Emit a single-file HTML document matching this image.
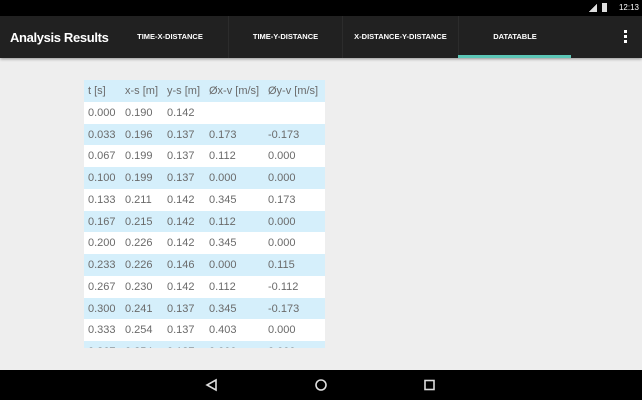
<!DOCTYPE html><html><head><style>
*{margin:0;padding:0;box-sizing:border-box}
body{width:642px;height:400px;overflow:hidden;background:#eeeeee;font-family:"Liberation Sans",sans-serif;position:relative}
.sb{position:absolute;top:0;left:0;width:642px;height:16px;background:#000;color:#fff;font-size:8px}
.tb{position:absolute;top:16px;left:0;width:642px;height:42px;background:#212121;color:#fff;box-shadow:0 1px 3px rgba(0,0,0,.4)}
.title{position:absolute;left:10px;top:14px;font-size:13px;font-weight:bold;letter-spacing:-.35px}
.tab{position:absolute;top:0;height:42px;font-size:7.5px;font-weight:bold;text-align:center;line-height:42px;border-left:1px solid #2c2c2c}
.ul{position:absolute;left:458px;top:39px;width:113px;height:3px;background:#5cc6b6}
.nav{position:absolute;top:370px;left:0;width:642px;height:30px;background:#000}
.tbl{position:absolute;left:84px;top:80px;width:241px;height:268px;overflow:hidden}
.r{height:21.75px;position:relative;font-size:11px;color:#6a6a6a;background:#fff}
.r.b{background:#d5effb}
.r span{position:absolute;top:5px}
</style></head><body>
<div class="sb"><span style="position:absolute;right:45px;top:4px;width:8px;height:8px;background:linear-gradient(135deg,transparent 50%,#ddd 50%)"></span><span style="position:absolute;right:35px;top:3px;width:5px;height:9px;background:#ddd"></span><span style="position:absolute;right:3px;top:3px">12:13</span></div>
<div class="tb"><div class="title">Analysis Results</div>
<div class="tab" style="left:112px;width:116px;border-left:none">TIME-X-DISTANCE</div>
<div class="tab" style="left:228px;width:114px">TIME-Y-DISTANCE</div>
<div class="tab" style="left:342px;width:116px">X-DISTANCE-Y-DISTANCE</div>
<div class="tab" style="left:458px;width:113px">DATATABLE</div>
<div class="ul"></div>
<div style="position:absolute;left:624px;top:14px;width:3px;height:3px;background:#fff;box-shadow:0 5px 0 #fff,0 10px 0 #fff"></div>
</div>
<div class="tbl">
<div class="r b"><span style="left:4px">t [s]</span><span style="left:41px">x-s [m]</span><span style="left:83px">y-s [m]</span><span style="left:125px">Øx-v [m/s]</span><span style="left:184px">Øy-v [m/s]</span></div>
<div class="r"><span style="left:4px">0.000</span><span style="left:41px">0.190</span><span style="left:83px">0.142</span></div>
<div class="r b"><span style="left:4px">0.033</span><span style="left:41px">0.196</span><span style="left:83px">0.137</span><span style="left:125px">0.173</span><span style="left:184px">-0.173</span></div>
<div class="r"><span style="left:4px">0.067</span><span style="left:41px">0.199</span><span style="left:83px">0.137</span><span style="left:125px">0.112</span><span style="left:184px">0.000</span></div>
<div class="r b"><span style="left:4px">0.100</span><span style="left:41px">0.199</span><span style="left:83px">0.137</span><span style="left:125px">0.000</span><span style="left:184px">0.000</span></div>
<div class="r"><span style="left:4px">0.133</span><span style="left:41px">0.211</span><span style="left:83px">0.142</span><span style="left:125px">0.345</span><span style="left:184px">0.173</span></div>
<div class="r b"><span style="left:4px">0.167</span><span style="left:41px">0.215</span><span style="left:83px">0.142</span><span style="left:125px">0.112</span><span style="left:184px">0.000</span></div>
<div class="r"><span style="left:4px">0.200</span><span style="left:41px">0.226</span><span style="left:83px">0.142</span><span style="left:125px">0.345</span><span style="left:184px">0.000</span></div>
<div class="r b"><span style="left:4px">0.233</span><span style="left:41px">0.226</span><span style="left:83px">0.146</span><span style="left:125px">0.000</span><span style="left:184px">0.115</span></div>
<div class="r"><span style="left:4px">0.267</span><span style="left:41px">0.230</span><span style="left:83px">0.142</span><span style="left:125px">0.112</span><span style="left:184px">-0.112</span></div>
<div class="r b"><span style="left:4px">0.300</span><span style="left:41px">0.241</span><span style="left:83px">0.137</span><span style="left:125px">0.345</span><span style="left:184px">-0.173</span></div>
<div class="r"><span style="left:4px">0.333</span><span style="left:41px">0.254</span><span style="left:83px">0.137</span><span style="left:125px">0.403</span><span style="left:184px">0.000</span></div>
<div class="r b"><span style="left:4px">0.367</span><span style="left:41px">0.254</span><span style="left:83px">0.137</span><span style="left:125px">0.000</span><span style="left:184px">0.000</span></div>
</div>
<div class="nav"><svg width="642" height="30" style="position:absolute;left:0;top:0" fill="none" stroke="#ddd" stroke-width="1.6">
<path d="M216 10 L207 15 L216 20 Z"/>
<circle cx="321" cy="15" r="5"/>
<rect x="425" y="10.5" width="9" height="9"/>
</svg></div>
</body></html>
